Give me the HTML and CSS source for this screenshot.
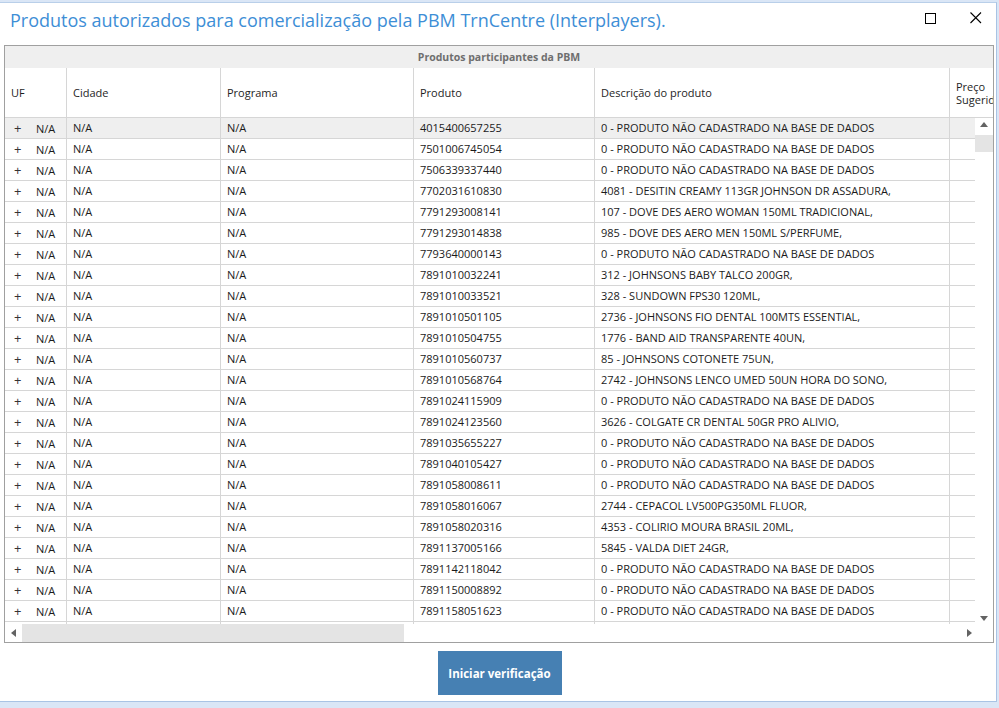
FILE: index.html
```html
<!DOCTYPE html>
<html>
<head>
<meta charset="utf-8">
<link rel="stylesheet" href="styles.css">
</head>
<body>
<div class="window">
  <div class="titlebar">
    <h1 class="title">Produtos autorizados para comercialização pela PBM TrnCentre (Interplayers).</h1>
    <div class="controls">
      <svg class="ctl" width="12" height="12" viewBox="0 0 12 12"><rect x="0.5" y="0.5" width="10" height="10" fill="none" stroke="#000" stroke-width="1"/></svg>
      <svg class="ctl close" width="12" height="12" viewBox="0 0 12 12"><path d="M0.5 0.5 L11 11 M11 0.5 L0.5 11" stroke="#000" stroke-width="1.1" fill="none"/></svg>
    </div>
  </div>

  <div class="grid">
    <div class="group-header">Produtos participantes da PBM</div>
    <div class="col-header">
      <div class="hc">UF</div>
      <div class="hc">Cidade</div>
      <div class="hc">Programa</div>
      <div class="hc">Produto</div>
      <div class="hc">Descrição do produto</div>
      <div class="hc last"><span>Preço</span><span>Sugerido</span></div>
    </div>
    <div class="body">
      <div class="rows">
        <div class="row sel"><div class="c uf"><span class="plus">+</span>N/A</div><div class="c">N/A</div><div class="c">N/A</div><div class="c">4015400657255</div><div class="c">0 - PRODUTO NÃO CADASTRADO NA BASE DE DADOS</div><div class="c"></div></div>
        <div class="row"><div class="c uf"><span class="plus">+</span>N/A</div><div class="c">N/A</div><div class="c">N/A</div><div class="c">7501006745054</div><div class="c">0 - PRODUTO NÃO CADASTRADO NA BASE DE DADOS</div><div class="c"></div></div>
        <div class="row"><div class="c uf"><span class="plus">+</span>N/A</div><div class="c">N/A</div><div class="c">N/A</div><div class="c">7506339337440</div><div class="c">0 - PRODUTO NÃO CADASTRADO NA BASE DE DADOS</div><div class="c"></div></div>
        <div class="row"><div class="c uf"><span class="plus">+</span>N/A</div><div class="c">N/A</div><div class="c">N/A</div><div class="c">7702031610830</div><div class="c">4081 - DESITIN CREAMY 113GR JOHNSON DR ASSADURA,</div><div class="c"></div></div>
        <div class="row"><div class="c uf"><span class="plus">+</span>N/A</div><div class="c">N/A</div><div class="c">N/A</div><div class="c">7791293008141</div><div class="c">107 - DOVE DES AERO WOMAN 150ML TRADICIONAL,</div><div class="c"></div></div>
        <div class="row"><div class="c uf"><span class="plus">+</span>N/A</div><div class="c">N/A</div><div class="c">N/A</div><div class="c">7791293014838</div><div class="c">985 - DOVE DES AERO MEN 150ML S/PERFUME,</div><div class="c"></div></div>
        <div class="row"><div class="c uf"><span class="plus">+</span>N/A</div><div class="c">N/A</div><div class="c">N/A</div><div class="c">7793640000143</div><div class="c">0 - PRODUTO NÃO CADASTRADO NA BASE DE DADOS</div><div class="c"></div></div>
        <div class="row"><div class="c uf"><span class="plus">+</span>N/A</div><div class="c">N/A</div><div class="c">N/A</div><div class="c">7891010032241</div><div class="c">312 - JOHNSONS BABY TALCO 200GR,</div><div class="c"></div></div>
        <div class="row"><div class="c uf"><span class="plus">+</span>N/A</div><div class="c">N/A</div><div class="c">N/A</div><div class="c">7891010033521</div><div class="c">328 - SUNDOWN FPS30 120ML,</div><div class="c"></div></div>
        <div class="row"><div class="c uf"><span class="plus">+</span>N/A</div><div class="c">N/A</div><div class="c">N/A</div><div class="c">7891010501105</div><div class="c">2736 - JOHNSONS FIO DENTAL 100MTS ESSENTIAL,</div><div class="c"></div></div>
        <div class="row"><div class="c uf"><span class="plus">+</span>N/A</div><div class="c">N/A</div><div class="c">N/A</div><div class="c">7891010504755</div><div class="c">1776 - BAND AID TRANSPARENTE 40UN,</div><div class="c"></div></div>
        <div class="row"><div class="c uf"><span class="plus">+</span>N/A</div><div class="c">N/A</div><div class="c">N/A</div><div class="c">7891010560737</div><div class="c">85 - JOHNSONS COTONETE 75UN,</div><div class="c"></div></div>
        <div class="row"><div class="c uf"><span class="plus">+</span>N/A</div><div class="c">N/A</div><div class="c">N/A</div><div class="c">7891010568764</div><div class="c">2742 - JOHNSONS LENCO UMED 50UN HORA DO SONO,</div><div class="c"></div></div>
        <div class="row"><div class="c uf"><span class="plus">+</span>N/A</div><div class="c">N/A</div><div class="c">N/A</div><div class="c">7891024115909</div><div class="c">0 - PRODUTO NÃO CADASTRADO NA BASE DE DADOS</div><div class="c"></div></div>
        <div class="row"><div class="c uf"><span class="plus">+</span>N/A</div><div class="c">N/A</div><div class="c">N/A</div><div class="c">7891024123560</div><div class="c">3626 - COLGATE CR DENTAL 50GR PRO ALIVIO,</div><div class="c"></div></div>
        <div class="row"><div class="c uf"><span class="plus">+</span>N/A</div><div class="c">N/A</div><div class="c">N/A</div><div class="c">7891035655227</div><div class="c">0 - PRODUTO NÃO CADASTRADO NA BASE DE DADOS</div><div class="c"></div></div>
        <div class="row"><div class="c uf"><span class="plus">+</span>N/A</div><div class="c">N/A</div><div class="c">N/A</div><div class="c">7891040105427</div><div class="c">0 - PRODUTO NÃO CADASTRADO NA BASE DE DADOS</div><div class="c"></div></div>
        <div class="row"><div class="c uf"><span class="plus">+</span>N/A</div><div class="c">N/A</div><div class="c">N/A</div><div class="c">7891058008611</div><div class="c">0 - PRODUTO NÃO CADASTRADO NA BASE DE DADOS</div><div class="c"></div></div>
        <div class="row"><div class="c uf"><span class="plus">+</span>N/A</div><div class="c">N/A</div><div class="c">N/A</div><div class="c">7891058016067</div><div class="c">2744 - CEPACOL LV500PG350ML FLUOR,</div><div class="c"></div></div>
        <div class="row"><div class="c uf"><span class="plus">+</span>N/A</div><div class="c">N/A</div><div class="c">N/A</div><div class="c">7891058020316</div><div class="c">4353 - COLIRIO MOURA BRASIL 20ML,</div><div class="c"></div></div>
        <div class="row"><div class="c uf"><span class="plus">+</span>N/A</div><div class="c">N/A</div><div class="c">N/A</div><div class="c">7891137005166</div><div class="c">5845 - VALDA DIET 24GR,</div><div class="c"></div></div>
        <div class="row"><div class="c uf"><span class="plus">+</span>N/A</div><div class="c">N/A</div><div class="c">N/A</div><div class="c">7891142118042</div><div class="c">0 - PRODUTO NÃO CADASTRADO NA BASE DE DADOS</div><div class="c"></div></div>
        <div class="row"><div class="c uf"><span class="plus">+</span>N/A</div><div class="c">N/A</div><div class="c">N/A</div><div class="c">7891150008892</div><div class="c">0 - PRODUTO NÃO CADASTRADO NA BASE DE DADOS</div><div class="c"></div></div>
        <div class="row"><div class="c uf"><span class="plus">+</span>N/A</div><div class="c">N/A</div><div class="c">N/A</div><div class="c">7891158051623</div><div class="c">0 - PRODUTO NÃO CADASTRADO NA BASE DE DADOS</div><div class="c"></div></div>
        <div class="row"><div class="c uf"></div><div class="c"></div><div class="c"></div><div class="c"></div><div class="c"></div><div class="c"></div></div>
      </div>
      <div class="vscroll">
        <div class="arrow up"></div>
        <div class="vthumb"></div>
        <div class="vspace"></div>
        <div class="arrow down"></div>
      </div>
    </div>
    <div class="hscroll-row">
      <div class="hscroll">
        <div class="arrow left"></div>
        <div class="hthumb"></div>
        <div class="hspace"></div>
        <div class="arrow right"></div>
      </div>
      <div class="corner"></div>
    </div>
  </div>

  <div class="footer">
    <button class="btn">Iniciar verificação</button>
  </div>
</div>
</body>
</html>
```
FILE: styles.css
```css
* { box-sizing: border-box; }
html, body { margin: 0; padding: 0; }
body {
  width: 999px;
  height: 708px;
  background: #dae6f6;
  overflow: hidden;
  font-family: "Open Sans", "Noto Sans", sans-serif;
}
.window {
  margin-top: 2px;
  width: 997px;
  height: 700px;
  background: #fff;
  border-top: 1px solid #b9cfe9;
  border-right: 1px solid #a9c3e4;
  border-bottom: 1px solid #a9c3e4;
  display: flex;
  flex-direction: column;
}
.titlebar {
  height: 42px;
  display: flex;
  align-items: flex-start;
  justify-content: space-between;
}
.title {
  margin: 4px 0 0 10px;
  font-weight: 400;
  font-size: 18px;
  color: #3d8ed6;
  line-height: 26px;
  white-space: nowrap;
}
.controls {
  display: flex;
  gap: 33px;
  margin: 10px 14px 0 0;
  align-items: flex-start;
}
.ctl { display: block; }
.close { margin-top: -1px; }

.grid {
  margin-left: 4px;
  width: 990px;
  height: 598px;
  border: 1px solid #a0a0a0;
  display: flex;
  flex-direction: column;
  font-size: 11px;
  color: #1b1b1b;
}
.group-header {
  height: 22px;
  background: #efefef;
  text-align: center;
  font-weight: 700;
  color: #6e6e6e;
  line-height: 22px;
  font-size: 10.5px;
}
.col-header {
  height: 50px;
  display: grid;
  grid-template-columns: 62px 154px 193px 181px 355px 43px;
  border-bottom: 1px solid #d6d6d6;
}
.hc {
  border-right: 1px solid #d6d6d6;
  padding-left: 6px;
  display: flex;
  align-items: center;
  line-height: 13px;
  color: #1e1e1e;
  white-space: nowrap;
  overflow: hidden;
}
.hc.last {
  border-right: none;
  flex-direction: column;
  align-items: flex-start;
  justify-content: center;
}

.body {
  height: 506px;
  display: flex;
  overflow: hidden;
}
.rows {
  width: 970px;
  overflow: hidden;
}
.row {
  height: 21px;
  display: grid;
  grid-template-columns: 62px 154px 193px 181px 355px 25px;
  border-bottom: 1px solid #d6d6d6;
}
.row.sel { background: #efefef; }
.c {
  border-right: 1px solid #d6d6d6;
  padding-left: 6px;
  line-height: 20px;
  white-space: nowrap;
  overflow: hidden;
}
.c:last-child { border-right: none; }
.c.uf { padding-left: 9px; }
.plus {
  display: inline-block;
  width: 22px;
  font-size: 13px;
  color: #333;
}

.vscroll {
  width: 18px;
  display: flex;
  flex-direction: column;
  align-items: stretch;
}
.vthumb { height: 17px; background: #e4e4e4; }
.vspace { flex: 1; }
.arrow { position: relative; flex: none; }
.arrow::after {
  content: "";
  position: absolute;
  width: 0; height: 0;
  border: 4px solid transparent;
}
.arrow.up, .arrow.down { height: 17px; }
.arrow.up::after { left: 5px; top: 4px; border-top-width: 0; border-bottom: 5px solid #636363; }
.arrow.down::after { left: 5px; top: 9px; border-bottom-width: 0; border-top: 5px solid #636363; }

.hscroll-row {
  height: 18px;
  display: flex;
}
.hscroll {
  width: 970px;
  display: flex;
}
.arrow.left, .arrow.right { width: 17px; }
.arrow.left::after { left: 6px; top: 5px; border-left-width: 0; border-right: 5px solid #636363; }
.arrow.right::after { left: 9px; top: 5px; border-right-width: 0; border-left: 5px solid #636363; }
.hthumb { width: 382px; background: #e4e4e4; }
.hspace { flex: 1; }
.corner { flex: 1; }

.footer {
  display: flex;
  justify-content: center;
  padding-top: 8px;
  padding-left: 3px;
}
.btn {
  width: 124px;
  height: 44px;
  background: #4680b3;
  border: none;
  color: #fff;
  font-family: "Open Sans", "Noto Sans", sans-serif;
  font-weight: 700;
  font-size: 11.5px;
}
```
